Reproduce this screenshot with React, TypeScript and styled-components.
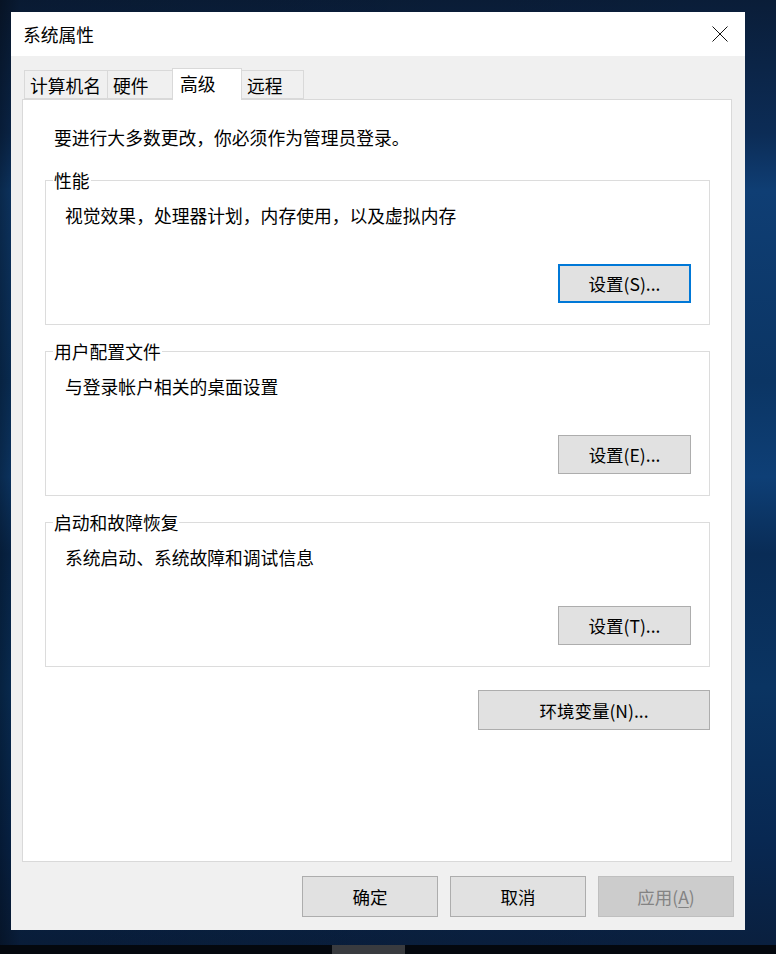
import React from 'react';
import styled, { createGlobalStyle } from 'styled-components';

const GlobalStyle = createGlobalStyle`
  html, body {
    margin: 0;
    padding: 0;
  }
  body {
    font-family: "Noto Sans CJK SC", "Noto Sans", sans-serif;
    background: #0a1f3a;
  }
`;

const Desktop = styled.div`
  width: 776px;
  height: 954px;
  display: flex;
  flex-direction: column;
  overflow: hidden;
  background:
    linear-gradient(to right, rgba(0, 0, 0, 0.35) 0, rgba(0, 0, 0, 0.1) 20px, rgba(0, 0, 0, 0) 740px),
    linear-gradient(
      to bottom,
      #0a1d38 0%,
      #0c2c56 14%,
      #0f3e74 20%,
      #0b3564 40%,
      #0e3f76 50%,
      #092c56 58%,
      #0a3462 72%,
      #082852 88%,
      #0a1f3d 100%
    );
`;

const Dialog = styled.div`
  margin: 12px 0 0 11px;
  width: 734px;
  height: 918px;
  display: flex;
  flex-direction: column;
  background: #f0f0f0;
`;

const TitleBar = styled.div`
  height: 44px;
  flex: none;
  display: flex;
  align-items: center;
  justify-content: space-between;
  padding: 0 17px 0 12px;
  background: #ffffff;
  font-size: 17.8px;
  color: #000;
`;

const CloseIcon = () => (
  <svg width="16" height="16" viewBox="0 0 16 16">
    <path d="M0.5 0.5 L15.5 15.5 M15.5 0.5 L0.5 15.5" stroke="#111" strokeWidth="1" fill="none" />
  </svg>
);

const Body = styled.div`
  flex: 1;
  display: flex;
  flex-direction: column;
  padding: 12px 11px 13px 11px;
  min-height: 0;
`;

const TabStrip = styled.div`
  height: 31px;
  flex: none;
  display: flex;
  align-items: flex-end;
  padding-left: 2px;
  position: relative;
  z-index: 1;
`;

const Tab = styled.div<{ $w: number; $active?: boolean }>`
  width: ${(p) => p.$w}px;
  height: ${(p) => (p.$active ? 32 : 29)}px;
  margin-bottom: ${(p) => (p.$active ? -1 : 0)}px;
  margin-left: -1px;
  box-sizing: border-box;
  display: flex;
  align-items: center;
  padding: 0 0 ${(p) => (p.$active ? 3 : 0)}px ${(p) => (p.$active ? 7 : 5)}px;
  border: 1px solid #d9d9d9;
  border-bottom: ${(p) => (p.$active ? 'none' : '1px solid #d9d9d9')};
  background: ${(p) => (p.$active ? '#ffffff' : '#f0f0f0')};
  font-size: 17.8px;
  color: #000;
  white-space: nowrap;
  &:first-child {
    margin-left: 0;
  }
`;

const Panel = styled.div`
  flex: 1;
  display: flex;
  flex-direction: column;
  margin-right: 2px;
  padding: 25px 21px 0 22px;
  background: #ffffff;
  border: 1px solid #d9d9d9;
`;

const Intro = styled.div`
  padding-left: 9px;
  font-size: 17.8px;
  line-height: 24px;
  color: #000;
`;

const Group = styled.div<{ $first?: boolean }>`
  position: relative;
  height: 145px;
  box-sizing: border-box;
  margin-top: ${(p) => (p.$first ? 31 : 26)}px;
  display: flex;
  flex-direction: column;
  justify-content: space-between;
  padding: 22px 18px 21px 19px;
  border: 1px solid #dcdcdc;
`;

const Legend = styled.div`
  position: absolute;
  top: -13px;
  left: 7px;
  padding: 0 1px;
  background: #ffffff;
  font-size: 17.8px;
  line-height: 24px;
  color: #000;
`;

const Desc = styled.div`
  font-size: 17.8px;
  line-height: 24px;
  color: #000;
`;

const Button = styled.button<{ $w: number; $h?: number; $focused?: boolean }>`
  width: ${(p) => p.$w}px;
  height: ${(p) => p.$h ?? 39}px;
  box-sizing: border-box;
  align-self: flex-end;
  display: flex;
  align-items: center;
  justify-content: center;
  padding: 0;
  background: #e1e1e1;
  border: ${(p) => (p.$focused ? '2px solid #0078d7' : '1px solid #adadad')};
  font-family: "Noto Sans CJK SC", "Noto Sans", sans-serif;
  font-size: 17.5px;
  color: #000;
  &:disabled {
    background: #cccccc;
    border-color: #bfbfbf;
    color: #838383;
  }
`;

const EnvButton = styled(Button)`
  margin-top: 23px;
  margin-right: 0;
`;

const Footer = styled.div`
  flex: none;
  display: flex;
  justify-content: flex-end;
  gap: 12px;
  margin-top: 14px;
`;

const Accel = styled.span`
  text-decoration: underline;
  text-underline-offset: 3px;
`;

const Taskbar = styled.div`
  margin-top: auto;
  height: 9px;
  flex: none;
  display: flex;
  background: #04080e;
`;

const TaskItem = styled.div`
  margin-left: 332px;
  width: 73px;
  background: #393b3f;
`;

const groups = [
  { title: '性能', desc: '视觉效果，处理器计划，内存使用，以及虚拟内存', button: '设置(S)...', focused: true },
  { title: '用户配置文件', desc: '与登录帐户相关的桌面设置', button: '设置(E)...' },
  { title: '启动和故障恢复', desc: '系统启动、系统故障和调试信息', button: '设置(T)...' },
];

const tabs = [
  { label: '计算机名', w: 84 },
  { label: '硬件', w: 66 },
  { label: '高级', w: 70, active: true },
  { label: '远程', w: 63 },
];

export default function App() {
  return (
    <>
      <GlobalStyle />
      <Desktop>
        <Dialog>
          <TitleBar>
            <span>系统属性</span>
            <CloseIcon />
          </TitleBar>
          <Body>
            <TabStrip>
              {tabs.map((t) => (
                <Tab key={t.label} $w={t.w} $active={t.active}>
                  {t.label}
                </Tab>
              ))}
            </TabStrip>
            <Panel>
              <Intro>要进行大多数更改，你必须作为管理员登录。</Intro>
              {groups.map((g, i) => (
                <Group key={g.title} $first={i === 0}>
                  <Legend>{g.title}</Legend>
                  <Desc>{g.desc}</Desc>
                  <Button $w={133} $focused={g.focused}>
                    {g.button}
                  </Button>
                </Group>
              ))}
              <EnvButton $w={232} $h={40}>
                环境变量(N)...
              </EnvButton>
            </Panel>
            <Footer>
              <Button $w={136} $h={41}>确定</Button>
              <Button $w={136} $h={41}>取消</Button>
              <Button $w={136} $h={41} disabled>
                应用(<Accel>A</Accel>)
              </Button>
            </Footer>
          </Body>
        </Dialog>
        <Taskbar>
          <TaskItem />
        </Taskbar>
      </Desktop>
    </>
  );
}
